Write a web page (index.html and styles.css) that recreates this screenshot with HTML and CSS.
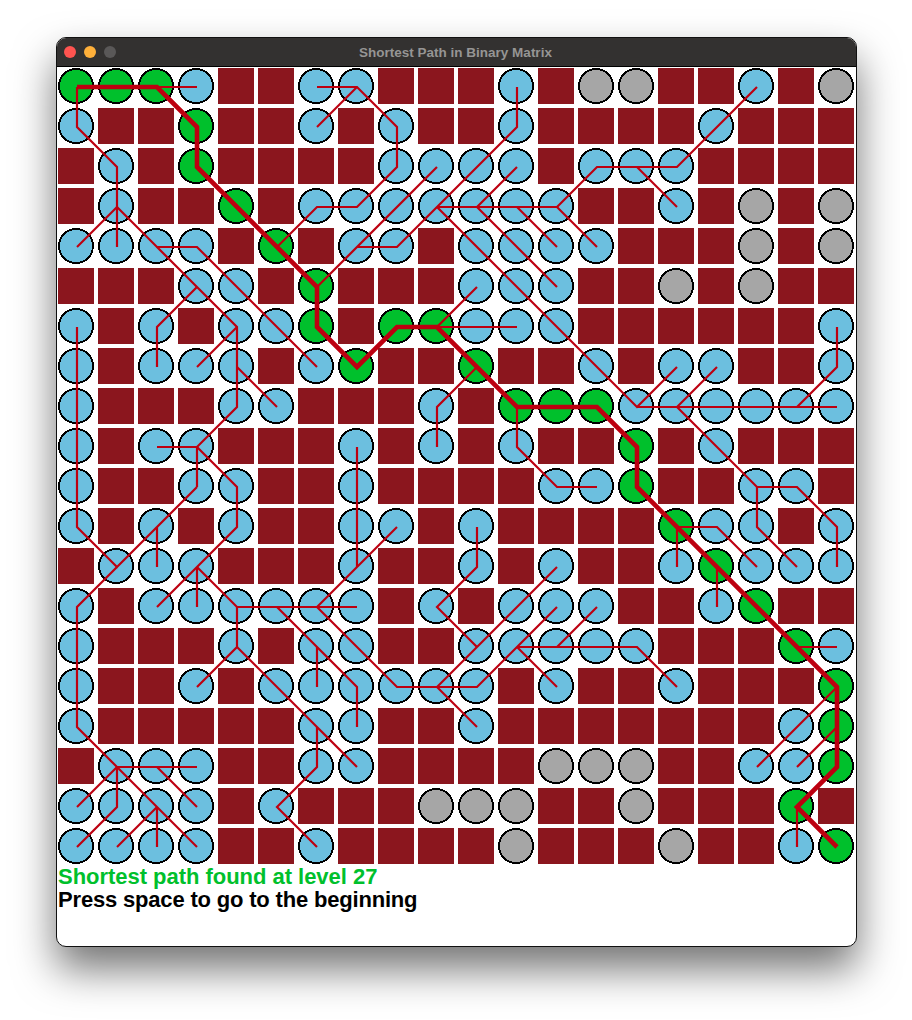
FILE: index.html
```html
<!DOCTYPE html>
<html lang="en">
<head>
    <meta charset="UTF-8">
    <title>Shortest Path in Binary Matrix</title>
    <link rel="stylesheet" href="styles.css">
</head>
<body>

    <div class="window">
        <div class="titlebar">
            <span class="light red"></span>
            <span class="light orange"></span>
            <span class="light off"></span>
            <span class="title">Shortest Path in Binary Matrix</span>
        </div>
        <svg id="board" class="board" width="800" height="800" viewBox="0 0 800 800"></svg>
        <div class="status">
            <div class="found">Shortest path found at level 27</div>
            <div class="hint">Press space to go to the beginning</div>
        </div>
    </div>

    <script src="script.js"></script>
</body>
</html>
```

FILE: styles.css
```css
html, body {
    height: 100%;
}

body {
    margin: 0;
    padding: 37px 0 0 56px;
    box-sizing: border-box;
    background-color: #fff;
    overflow: hidden;
}

.window {
    width: 801px;
    height: 910px;
    box-sizing: border-box;
    background-color: #fff;
    border: 1px solid #111;
    border-radius: 10px;
    box-shadow: 0 22px 42px rgba(0,0,0,0.55);
    overflow: hidden;
}

.titlebar {
    position: relative;
    display: flex;
    align-items: center;
    gap: 8px;
    height: 28px;
    padding-left: 7px;
    background-color: #333130;
    border-bottom: 1px solid #000;
}

.light {
    width: 12px;
    height: 12px;
    border-radius: 50%;
}

.red { background-color: #ff5450; }
.orange { background-color: #ffb03a; }
.off { background-color: #5a5858; }

.title {
    position: absolute;
    left: 0;
    right: 2px;
    text-align: center;
    font-family: 'Liberation Sans', Arial, sans-serif;
    font-size: 13.5px;
    font-weight: bold;
    color: #969594;
}

.board {
    display: block;
}

.wall { fill: #8b161e; }

.cell {
    stroke: #000;
    stroke-width: 2;
    shape-rendering: crispEdges;
}

.open { fill: #6cbfdf; }
.path { fill: #00c02c; }
.unseen { fill: #a6a6a6; }

.edge {
    fill: none;
    stroke: #bd0010;
    stroke-width: 2.2;
}

.route {
    fill: none;
    stroke: #bd0010;
    stroke-width: 4.6;
}

.status {
    margin-top: -2px;
    padding-left: 1px;
    font-family: 'Liberation Sans', Arial, sans-serif;
    font-size: 22px;
    font-weight: bold;
    line-height: 23px;
}

.found {
    color: #00c02c;
    letter-spacing: -0.03px;
}

.hint {
    color: #000;
    letter-spacing: -0.18px;
}
```

FILE: script.js
```js
// # wall, o visited, g on the shortest path, u not reached
const map = [
    'gggo##oo###o#uu##o#u',
    'o##g##o#o##o####o###',
    '#o#g####oooo#ooo####',
    '#o##g#ooooooo##o#u#u',
    'oooo#g#oo#oooo###u#u',
    '###oo#g###ooo##u#u##',
    'o#o#oog#ggooo######o',
    'o#ooo#og##g##o#oo##o',
    'o###oo###o#gggoooooo',
    'o#oo###o#o#o##g#o###',
    'o##oo##o####oog##oo#',
    'o#o#o##oo#o####goo#o',
    '#ooo###o##o#o##ogooo',
    'o#oooooo#o#ooo##og##',
    'o###o#oo##ooooo###go',
    'o##o#oooooo#o##o###g',
    'o#####oo##o#######og',
    '#ooo##oo####uuu##oog',
    'oooo#o###uuu##u###g#',
    'oooo##o####u###u##og'
];

const thin = [
    '2,0 3,0',
    '0,0 0,1 1,2 1,4',
    '1,3 0,4',
    '1,3 2,4 3,4 6,7',
    '2,4 3,5 4,6 4,8 3,9 2,9',
    '3,5 2,6 2,7',
    '4,6 3,7',
    '4,7 5,8',
    '3,9 3,10',
    '3,9 4,10 4,11 3,12 2,13',
    '3,10 1,12 0,11 0,6',
    '2,11 2,12',
    '1,12 0,13 0,16 1,17 3,17',
    '2,17 3,18',
    '1,17 0,18',
    '1,17 1,18 0,19',
    '1,17 2,18 3,19',
    '2,18 1,19',
    '2,18 2,19',
    '3,12 3,13',
    '3,12 4,13 7,13',
    '4,13 4,14 3,15',
    '4,14 7,17',
    '6,16 6,17 5,18 6,19',
    '5,13 7,15 7,16',
    '6,14 6,15',
    '6,13 7,12 8,11',
    '7,12 7,9',
    '6,13 8,15 10,15 12,13',
    '9,15 12,12',
    '9,15 10,16',
    '10,14 9,13 10,12 10,11',
    '11,14 14,14 15,15',
    '12,14 13,13',
    '11,14 12,15',
    '5,4 6,3 7,3 8,2 8,1 7,0 6,0',
    '7,0 6,1',
    '6,5 9,2',
    '7,4 8,4 9,3 11,1 11,0',
    '9,3 12,3 13,4',
    '11,2 10,3 12,5',
    '11,3 12,4',
    '12,3 13,2 15,2 17,0',
    '14,2 15,3',
    '9,3 14,8 15,7',
    '10,5 9,6 11,6',
    '10,7 9,8 9,9',
    '14,8 19,8',
    '15,8 16,7',
    '18,8 19,7 19,6',
    '15,8 17,10 18,10 19,11 19,12',
    '11,8 11,9 12,10 13,10',
    '17,10 17,11 18,12',
    '15,11 16,11 17,12',
    '15,11 15,12',
    '16,12 16,13',
    '18,14 19,14',
    '19,15 17,17',
    '19,16 18,17',
    '18,18 18,19'
];

const route = '0,0 2,0 3,1 3,2 6,5 6,6 7,7 8,6 9,6 11,8 13,8 14,9 14,10 19,15 19,17 18,18 19,19';

function points(chain) {
    return chain.split(' ').map(p => {
        const [c, r] = p.split(',');
        return (c * 40 + 20) + ',' + (r * 40 + 20);
    }).join(' ');
}

let svg = '';
map.forEach((row, r) => {
    [...row].forEach((ch, c) => {
        const x = c * 40, y = r * 40;
        if (ch === '#') {
            svg += `<rect class="wall" x="${x + 1}" y="${y + 1}" width="36" height="36"/>`;
        } else {
            const kind = ch === 'g' ? 'path' : ch === 'u' ? 'unseen' : 'open';
            svg += `<circle class="cell ${kind}" cx="${x + 19}" cy="${y + 19}" r="17"/>`;
        }
    });
});
thin.forEach(chain => {
    svg += `<polyline class="edge" points="${points(chain)}"/>`;
});
svg += `<polyline class="route" points="${points(route)}"/>`;

document.getElementById('board').innerHTML = svg;
```
